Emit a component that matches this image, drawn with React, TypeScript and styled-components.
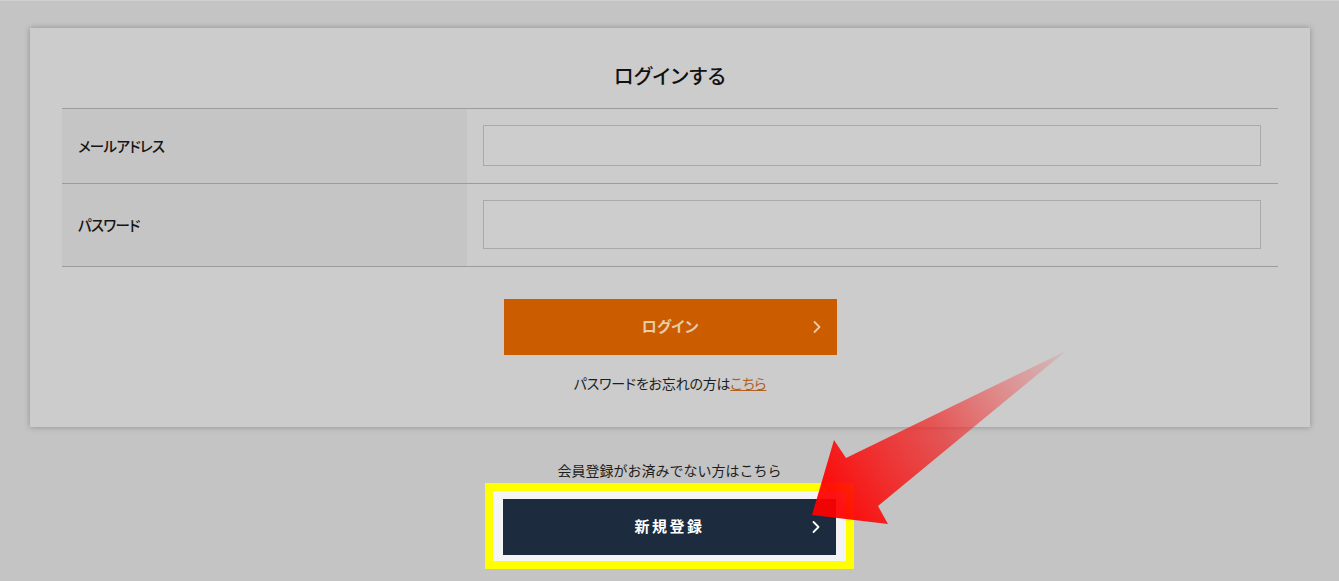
import React from "react";
import styled, { createGlobalStyle } from "styled-components";

const GlobalStyle = createGlobalStyle`
  html, body {
    margin: 0;
    padding: 0;
    background: #c4c4c4;
  }
  body {
    font-family: "Noto Sans CJK JP", "Noto Sans", sans-serif;
    color: #1e1e1e;
  }
`;

const Page = styled.div`
  position: relative;
  width: 1339px;
  height: 581px;
  overflow: hidden;
  padding-top: 28px;
  box-sizing: border-box;
  border-top: 1px solid #d0d0d0;
`;

const Card = styled.section`
  margin: -1px 29px 0 30px;
  background: #cccccc;
  box-shadow: 0 0 6px rgba(0, 0, 0, 0.28);
  padding: 0 32px 34px;
`;

const Title = styled.h1`
  margin: 0;
  padding: 33px 0 17px;
  text-align: center;
  font-size: 20px;
  line-height: 30px;
  font-weight: 500;
  color: #111;
  font-feature-settings: "palt";
  letter-spacing: 0.5px;
`;

const Table = styled.div`
  border-top: 1px solid #9c9c9c;
`;

const Row = styled.div`
  display: grid;
  grid-template-columns: 405px 1fr;
  border-bottom: 1px solid #9c9c9c;
`;

const LabelCell = styled.div`
  background: #c5c5c5;
  display: flex;
  align-items: center;
  padding: 0 0 2px 16px;
  font-size: 14.5px;
  font-weight: 500;
  letter-spacing: -0.7px;
  color: #151515;
  font-feature-settings: "palt";
`;

const FieldCell = styled.div`
  padding: 16px 17px 17px 16px;
`;

const Input = styled.input<{ $h: number }>`
  display: block;
  width: 100%;
  box-sizing: border-box;
  height: ${(p) => p.$h}px;
  border: 1px solid #a9a9a9;
  background: #cdcdcd;
  outline: none;
`;

const Actions = styled.div`
  display: flex;
  flex-direction: column;
  align-items: center;
  padding-top: 32px;
`;

const Button = styled.button<{ $bg: string; $fg: string; $spacing: number }>`
  position: relative;
  width: 333px;
  height: 56px;
  border: none;
  padding: 0 0 3px;
  background: ${(p) => p.$bg};
  color: ${(p) => p.$fg};
  font-family: inherit;
  font-size: 15px;
  font-weight: 700;
  letter-spacing: ${(p) => p.$spacing}px;
  display: flex;
  align-items: center;
  justify-content: center;
  cursor: pointer;
  font-feature-settings: "palt";

  svg {
    position: absolute;
    right: 15px;
    top: 50%;
    transform: translateY(-50%);
  }
`;

const Note = styled.p`
  margin: 18px 0 0;
  font-size: 14px;
  line-height: 20px;
  letter-spacing: -0.2px;
  color: #1e1e1e;
  font-feature-settings: "palt";

  a {
    color: #b4601c;
    text-decoration: underline;
  }
`;

const Register = styled.div`
  display: flex;
  flex-direction: column;
  align-items: center;
  padding-top: 33px;
`;

const RegisterNote = styled.p`
  margin: 0 0 3px;
  font-size: 14px;
  line-height: 20px;
  color: #1e1e1e;
`;

const Highlight = styled.div`
  border: 8px solid #ffff00;
  background: #f4f4f7;
  padding: 8px 10px 6px;
`;

const Overlay = styled.svg`
  position: absolute;
  left: 0;
  top: 0;
  pointer-events: none;
`;

function Chevron({ color }: { color: string }) {
  return (
    <svg width="10" height="14" viewBox="0 0 10 14">
      <polyline
        points="2.5,2 7.5,7 2.5,12"
        fill="none"
        stroke={color}
        strokeWidth="1.8"
        strokeLinecap="round"
        strokeLinejoin="round"
      />
    </svg>
  );
}

export default function App() {
  return (
    <>
      <GlobalStyle />
      <Page>
        <Card>
          <Title>ログインする</Title>
          <Table>
            <Row>
              <LabelCell>メールアドレス</LabelCell>
              <FieldCell>
                <Input $h={41} type="email" />
              </FieldCell>
            </Row>
            <Row>
              <LabelCell>パスワード</LabelCell>
              <FieldCell>
                <Input $h={49} type="password" />
              </FieldCell>
            </Row>
          </Table>
          <Actions>
            <Button $bg="#cc5c00" $fg="#e8cba8" $spacing={0}>
              ログイン
              <Chevron color="#e8cba8" />
            </Button>
            <Note>
              パスワードをお忘れの方は<a href="#">こちら</a>
            </Note>
          </Actions>
        </Card>
        <Register>
          <RegisterNote>会員登録がお済みでない方はこちら</RegisterNote>
          <Highlight>
            <Button $bg="#1c2b3d" $fg="#ffffff" $spacing={2.5}>
              新規登録
              <Chevron color="#ffffff" />
            </Button>
          </Highlight>
        </Register>
        <Overlay width="1339" height="581" viewBox="0 0 1339 581">
          <defs>
            <linearGradient
              id="arrowFill"
              gradientUnits="userSpaceOnUse"
              x1="1066"
              y1="350"
              x2="835"
              y2="495"
            >
              <stop offset="0" stopColor="#ff4040" stopOpacity="0.12" />
              <stop offset="0.55" stopColor="#f02424" stopOpacity="0.7" />
              <stop offset="1" stopColor="#ff0000" stopOpacity="0.93" />
            </linearGradient>
          </defs>
          <polygon
            points="1066,350 878,505 888,523 812,514 834,439 846,457"
            fill="url(#arrowFill)"
          />
        </Overlay>
      </Page>
    </>
  );
}
